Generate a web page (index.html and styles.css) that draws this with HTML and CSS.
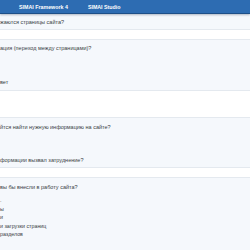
FILE: index.html
```html
<!DOCTYPE html>
<html lang="ru">
<head>
<meta charset="utf-8">
<link rel="stylesheet" href="styles.css">
</head>
<body>
<header class="topbar">
  <nav class="nav">
    <a class="nav-link">SIMAI Framework 4</a>
    <a class="nav-link">SIMAI Studio</a>
  </nav>
</header>
<main class="survey">
  <section class="block b1">
    <p class="q">жаются страницы сайта?</p>
  </section>
  <div class="field f1"></div>
  <section class="block b2">
    <p class="q gap">ация (переход между страницами)?</p>
    <p class="q">вет</p>
  </section>
  <div class="field f2"></div>
  <section class="block b3">
    <p class="q gap">йтся найти нужную информацию на сайте?</p>
    <p class="q">формации вызвал затруднение?</p>
  </section>
  <div class="field f3"></div>
  <section class="block b4">
    <p class="q">вы бы внесли в работу сайта?</p>
    <ul class="opts">
      <li>.</li>
      <li>ы</li>
      <li>и</li>
      <li>и загрузки страниц</li>
      <li>разделов</li>
    </ul>
  </section>
</main>
</body>
</html>
```
FILE: styles.css
```css
html, body {
  margin: 0;
  padding: 0;
  background: #f5f8fc;
  font-family: "Liberation Sans", Arial, sans-serif;
  color: #3a3f45;
  overflow: hidden;
}
.topbar {
  height: 13px;
  background: #2d6cb2;
  border-bottom: 1px solid #1d4f88;
  box-shadow: 0 1px 2px rgba(40, 60, 90, 0.35);
  position: relative;
  z-index: 1;
}
.nav {
  display: flex;
  align-items: center;
  height: 13px;
  padding-left: 19px;
  gap: 20px;
}
.nav-link {
  color: #fff;
  font-size: 5.3px;
  font-weight: bold;
}
.survey {
  display: flex;
  flex-direction: column;
  padding-top: 1px;
}
.block {
  background: #f5f8fc;
  border-bottom: 1px solid #e4e9ef;
}
.q {
  margin: 0;
  font-size: 5.5px;
  line-height: 8px;
  white-space: nowrap;
}
.b1 { padding: 3px 0 3px; }
.b2 { padding: 4px 0 4px; }
.b2 .gap { margin-bottom: 26px; }
.b3 { padding: 5px 0 3px; }
.b3 .gap { margin-bottom: 25px; }
.b4 { padding: 5px 0 10px; border-bottom: 0; }
.field {
  background: #fff;
  border-bottom: 1px solid #e4e9ef;
}
.f1 { height: 9px; }
.f2 { height: 26px; }
.f3 { height: 9px; }
.opts {
  list-style: none;
  margin: 5px 0 0;
  padding: 0;
  font-size: 5.3px;
  line-height: 8.5px;
}
```
